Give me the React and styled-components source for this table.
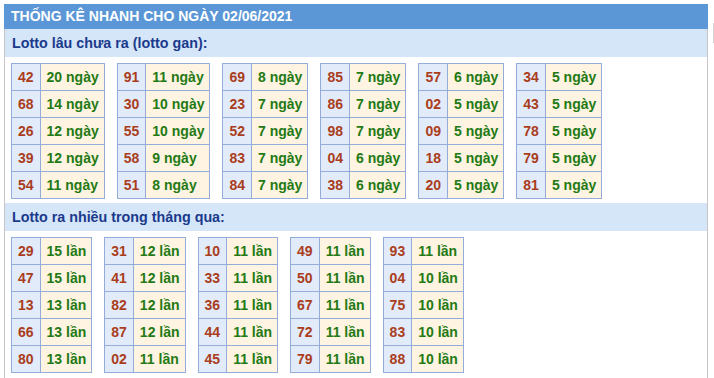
import React from "react";
import styled, { createGlobalStyle } from "styled-components";

const Global = createGlobalStyle`
  html, body { margin: 0; padding: 0; background: #ffffff; }
  body { font-family: "Liberation Sans", Arial, sans-serif; overflow: hidden; }
`;

const Page = styled.div`
  display: flex;
  align-items: flex-start;
  padding: 4px 0 0 4px;
`;

const Panel = styled.div`
  width: 704px;
  display: flex;
  flex-direction: column;
`;

const EdgeMark = styled.div`
  width: 1px;
  height: 20px;
  margin: 19px 0 0 5px;
  background: #d2d2d2;
`;

const Header = styled.div`
  height: 25px;
  line-height: 25px;
  padding-left: 7px;
  background: #5b97d6;
  color: #ffffff;
  font-size: 14px;
  font-weight: bold;
`;

const Body = styled.div`
  border-left: 1px solid #c6c6c6;
  border-right: 1px solid #c6c6c6;
  padding-bottom: 10px;
`;

const SectionTitle = styled.div`
  height: 28px;
  line-height: 29px;
  padding-left: 7px;
  background: #d4e6f8;
  color: #1b3a8c;
  font-size: 14.3px;
  font-weight: bold;
`;

const TableRow = styled.div`
  display: flex;
  align-items: flex-start;
  gap: 12px;
  padding: 6px 0 4px 6px;
`;

const Table = styled.table`
  border-collapse: collapse;
  font-size: 14px;
  font-weight: bold;
`;

const Cell = styled.td`
  border: 1px solid #94acd9;
  padding: ${(p) => (p.$num ? "5px 6px" : "5px 5px 5px 6px")};
  line-height: 16px;
  white-space: nowrap;
  background: ${(p) => (p.$num ? "#e1ebfa" : "#fff3e1")};
  color: ${(p) => (p.$num ? "#aa3d1c" : "#237a14")};
  text-align: ${(p) => (p.$num ? "center" : "left")};
`;

const gan = [
  [["42", 20], ["68", 14], ["26", 12], ["39", 12], ["54", 11]],
  [["91", 11], ["30", 10], ["55", 10], ["58", 9], ["51", 8]],
  [["69", 8], ["23", 7], ["52", 7], ["83", 7], ["84", 7]],
  [["85", 7], ["86", 7], ["98", 7], ["04", 6], ["38", 6]],
  [["57", 6], ["02", 5], ["09", 5], ["18", 5], ["20", 5]],
  [["34", 5], ["43", 5], ["78", 5], ["79", 5], ["81", 5]],
];

const nhieu = [
  [["29", 15], ["47", 15], ["13", 13], ["66", 13], ["80", 13]],
  [["31", 12], ["41", 12], ["82", 12], ["87", 12], ["02", 11]],
  [["10", 11], ["33", 11], ["36", 11], ["44", 11], ["45", 11]],
  [["49", 11], ["50", 11], ["67", 11], ["72", 11], ["79", 11]],
  [["93", 11], ["04", 10], ["75", 10], ["83", 10], ["88", 10]],
];

function StatTable({ rows, unit }) {
  return (
    <Table>
      <tbody>
        {rows.map(([n, v]) => (
          <tr key={n}>
            <Cell $num>{n}</Cell>
            <Cell>
              {v} {unit}
            </Cell>
          </tr>
        ))}
      </tbody>
    </Table>
  );
}

function Section({ title, groups, unit }) {
  return (
    <>
      <SectionTitle>{title}</SectionTitle>
      <TableRow>
        {groups.map((g, i) => (
          <StatTable key={i} rows={g} unit={unit} />
        ))}
      </TableRow>
    </>
  );
}

export default function App() {
  return (
    <>
      <Global />
      <Page>
        <Panel>
          <Header>THỐNG KÊ NHANH CHO NGÀY 02/06/2021</Header>
          <Body>
            <Section title="Lotto lâu chưa ra (lotto gan):" groups={gan} unit="ngày" />
            <Section title="Lotto ra nhiều trong tháng qua:" groups={nhieu} unit="lần" />
          </Body>
        </Panel>
        <EdgeMark />
      </Page>
    </>
  );
}
